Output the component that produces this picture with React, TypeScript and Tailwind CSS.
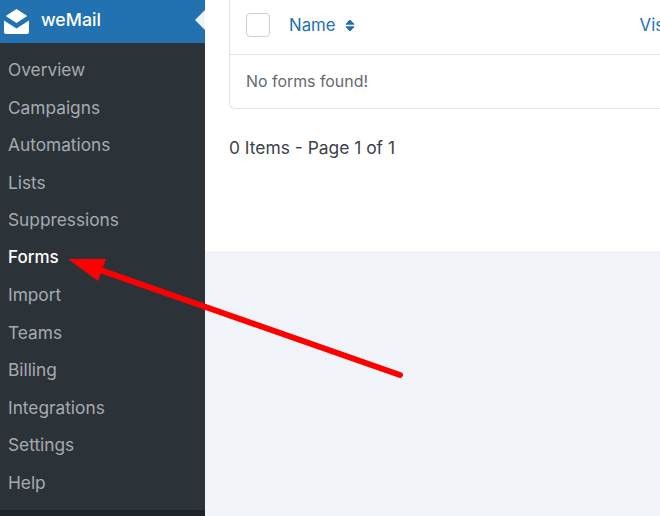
const menu = ['Overview', 'Campaigns', 'Automations', 'Lists', 'Suppressions', 'Forms', 'Import', 'Teams', 'Billing', 'Integrations', 'Settings', 'Help'];

const LogoIcon = () => (
	<svg width="26" height="26" viewBox="0 0 26 26" className="shrink-0">
		<path d="M12.5 0.5 L22.5 7 L12.5 13.5 L2.5 7 Z" fill="#fff" stroke="#fff" strokeLinejoin="round" />
		<path d="M0 11.5 L12.5 19.5 L25 11.5 L25 23 Q25 25 23 25 L2 25 Q0 25 0 23 Z" fill="#fff" />
	</svg>
);

const SortIcon = () => (
	<svg width="10" height="13" viewBox="0 0 10 13" className="ml-[9px]">
		<path d="M5 1 L9 5.2 L1 5.2 Z" fill="#2271b1" stroke="#2271b1" strokeLinejoin="round" />
		<path d="M5 12 L9 7.8 L1 7.8 Z" fill="#2271b1" stroke="#2271b1" strokeLinejoin="round" />
	</svg>
);

const Arrow = () => (
	<svg width="660" height="516" viewBox="0 0 660 516" className="absolute inset-0 pointer-events-none">
		<path d="M100 270 L400 375" stroke="#fe0000" strokeWidth="6" strokeLinecap="round" />
		<path d="M68 259 L106 259 L98 281 Z" fill="#fe0000" />
	</svg>
);

export default function App() {
	return (
		<div className="relative flex w-[660px] h-[516px] overflow-hidden bg-[#f0f4f8] font-['Inter',sans-serif]">
			<aside className="w-[205px] shrink-0 flex flex-col bg-[#2c3338]">
				<div className="relative flex items-center h-[43px] bg-[#2271b1] pl-1 gap-[11px]">
					<LogoIcon />
					<span className="mb-[3px] text-white text-[17.7px] font-medium">weMail</span>
					<div className="absolute right-0 top-[10px] border-y-[10px] border-y-transparent border-r-[10px] border-r-[#f0f4f8]" />
				</div>
				<nav className="flex flex-col pt-[8.3px]">
					{menu.map((item) => (
						<a
							key={item}
							className={
								item === 'Forms'
									? 'h-[37.5px] leading-[37.5px] pl-2 text-[17px] text-white font-medium'
									: 'h-[37.5px] leading-[37.5px] pl-2 text-[17.3px] text-[#a7aab2]'
							}
						>
							{item}
						</a>
					))}
				</nav>
				<div className="mt-auto h-[6px] bg-[#1d2327]" />
			</aside>
			<main className="flex-1 min-w-0">
				<div className="h-[251px] bg-white pl-6 overflow-hidden">
					<div className="w-[600px] h-[109px] border-l border-b border-[#e5e5e5] rounded-bl-[6px]">
						<div className="flex items-center h-[55px] border-b border-[#e5e5e5] pl-4 pb-1">
							<span className="w-6 h-6 rounded-[4px] border border-[#d0d0d0] bg-white shrink-0" />
							<span className="ml-[19px] pt-[2px] text-[16.8px] text-[#2271b1]">Name</span>
							<SortIcon />
							<span className="ml-[285px] pt-[2px] text-[16.8px] text-[#2271b1]">Visits</span>
						</div>
						<div className="pl-4 pt-[15px] text-[15.9px] leading-6 text-[#646970]">No forms found!</div>
					</div>
					<p className="mt-[27px] text-[17.4px] leading-6 text-[#3c434a]">0 Items - Page 1 of 1</p>
				</div>
			</main>
			<Arrow />
		</div>
	);
}
